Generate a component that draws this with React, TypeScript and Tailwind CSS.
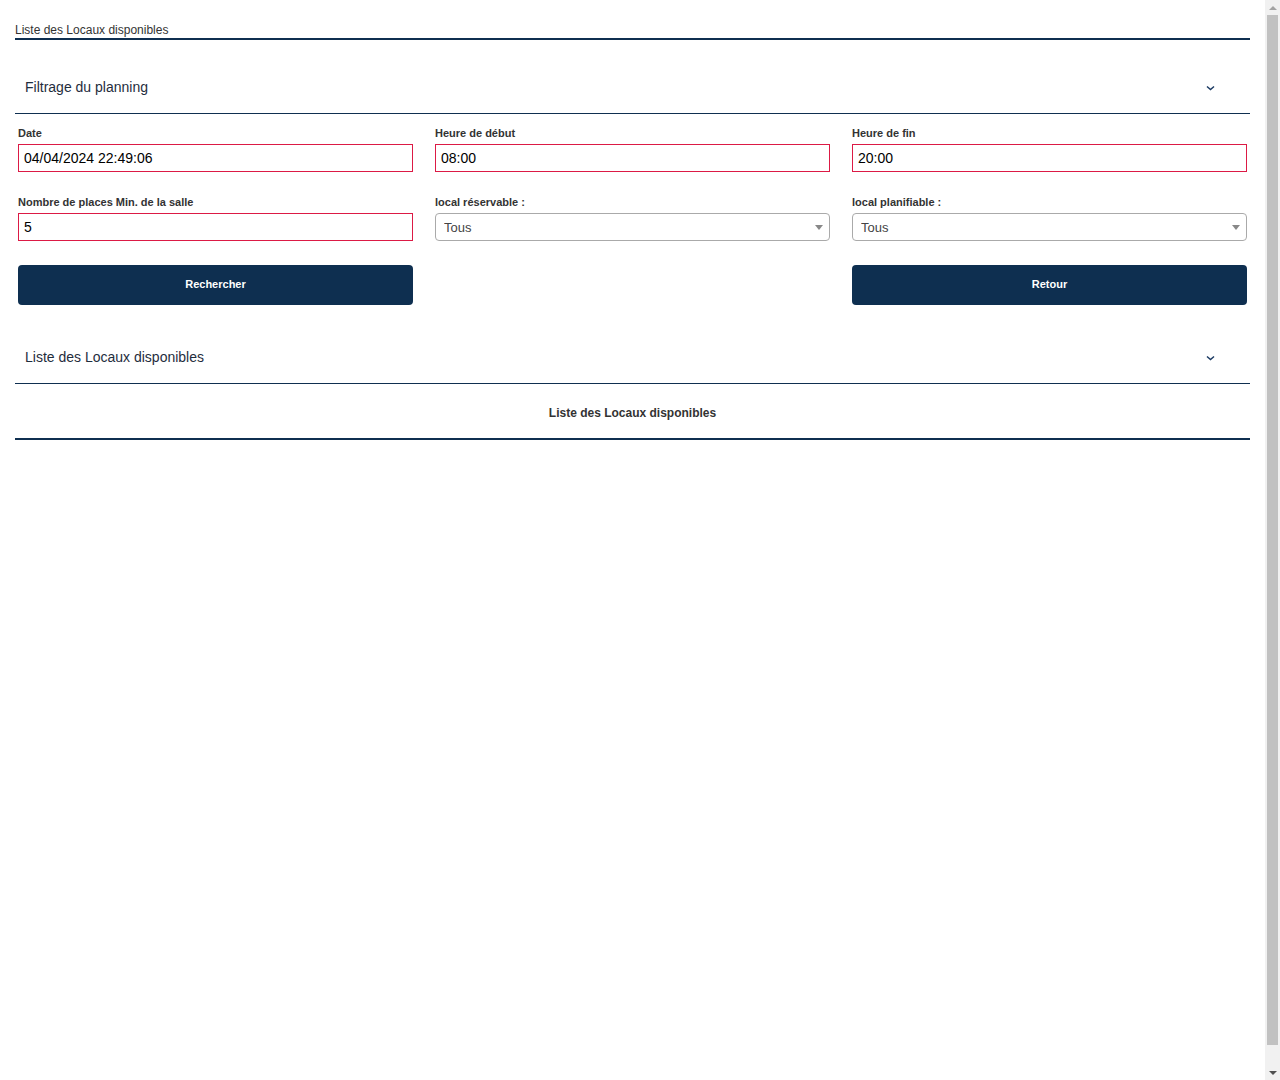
import React, { useState } from "react";

const font = { fontFamily: '"Liberation Sans", Arial, sans-serif' };

const Chevron: React.FC = () => (
  <svg width="9" height="6" viewBox="0 0 9 6" className="mt-[2px] text-[#1b3a63]">
    <path d="M1 1.5l3.5 3L8 1.5" fill="none" stroke="currentColor" strokeWidth="1.5" />
  </svg>
);

const AccordionHeader: React.FC<{ title: string }> = ({ title }) => (
  <div className="flex h-[53px] items-center justify-between border-b border-[#0f2f50] pl-[10px] pr-[35px]">
    <span className="text-[14px] text-[#1f2d3d]">{title}</span>
    <Chevron />
  </div>
);

const TextField: React.FC<{ label: string; value: string; onChange: (v: string) => void }> = ({
  label,
  value,
  onChange,
}) => (
  <div>
    <label className="mb-[4px] block text-[11px] font-bold leading-[13px] text-[#333]">{label}</label>
    <input
      type="text"
      value={value}
      onChange={(e) => onChange(e.target.value)}
      className="h-[28px] w-full border border-[#dc1a45] px-[5px] text-[14px] text-black outline-none"
    />
  </div>
);

const SelectField: React.FC<{ label: string; value: string; onChange: (v: string) => void }> = ({
  label,
  value,
  onChange,
}) => (
  <div>
    <label className="mb-[4px] block text-[11px] font-bold leading-[13px] text-[#333]">{label}</label>
    <div className="relative">
      <select
        value={value}
        onChange={(e) => onChange(e.target.value)}
        className="h-[28px] w-full appearance-none rounded-[4px] border border-[#aaa] bg-white pl-[8px] pt-[2px] text-[13px] text-[#444] outline-none"
      >
        <option>Tous</option>
        <option>Oui</option>
        <option>Non</option>
      </select>
      <span className="pointer-events-none absolute right-[7px] top-[12px] h-0 w-0 border-x-[4px] border-t-[5px] border-x-transparent border-t-[#888]" />
    </div>
  </div>
);

const Scrollbar: React.FC = () => (
  <div className="flex h-[1080px] w-[15px] flex-col items-center bg-[#f1f1f1]">
    <div className="flex h-[15px] w-full items-center justify-center">
      <span className="h-0 w-0 border-x-[4px] border-b-[4px] border-x-transparent border-b-[#a3a3a3]" />
    </div>
    <div className="mx-[2px] h-[1030px] w-[11px] bg-[#c1c1c1]" />
    <div className="flex-1" />
    <div className="flex h-[15px] w-full items-center justify-center">
      <span className="h-0 w-0 border-x-[4px] border-t-[4px] border-x-transparent border-t-[#505050]" />
    </div>
  </div>
);

const App: React.FC = () => {
  const [filters, setFilters] = useState({
    date: "04/04/2024 22:49:06",
    start: "08:00",
    end: "20:00",
    places: "5",
    reservable: "Tous",
    planifiable: "Tous",
  });

  const set = (name: string) => (v: string) => setFilters({ ...filters, [name]: v });

  const btn = "h-[40px] rounded-[4px] bg-[#0e2f50] pb-[2px] text-[11px] font-bold text-white";

  return (
    <div style={font} className="flex h-[1080px] overflow-hidden bg-white">
      <div className="flex-1 px-[15px]">
        <div className="border-b-2 border-[#0f2f50] pt-[22px] text-[12px] leading-[16px] text-[#333]">
          Liste des Locaux disponibles
        </div>

        <div className="mt-[21px]">
          <AccordionHeader title="Filtrage du planning" />
          <div className="px-[3px] pt-[13px]">
            <div className="grid grid-cols-3 gap-x-[22px] gap-y-[24px]">
              <TextField label="Date" value={filters.date} onChange={set("date")} />
              <TextField label="Heure de début" value={filters.start} onChange={set("start")} />
              <TextField label="Heure de fin" value={filters.end} onChange={set("end")} />
              <TextField label="Nombre de places Min. de la salle" value={filters.places} onChange={set("places")} />
              <SelectField label="local réservable :" value={filters.reservable} onChange={set("reservable")} />
              <SelectField label="local planifiable :" value={filters.planifiable} onChange={set("planifiable")} />
              <button type="button" className={btn}>
                Rechercher
              </button>
              <div />
              <button type="button" className={btn}>
                Retour
              </button>
            </div>
          </div>
        </div>

        <div className="mt-[26px]">
          <AccordionHeader title="Liste des Locaux disponibles" />
          <div className="flex h-[56px] items-center justify-center border-b-2 border-[#0f2f50] pt-[4px] text-[12px] font-bold text-[#333]">
            Liste des Locaux disponibles
          </div>
        </div>
      </div>
      <Scrollbar />
    </div>
  );
};

export default App;
